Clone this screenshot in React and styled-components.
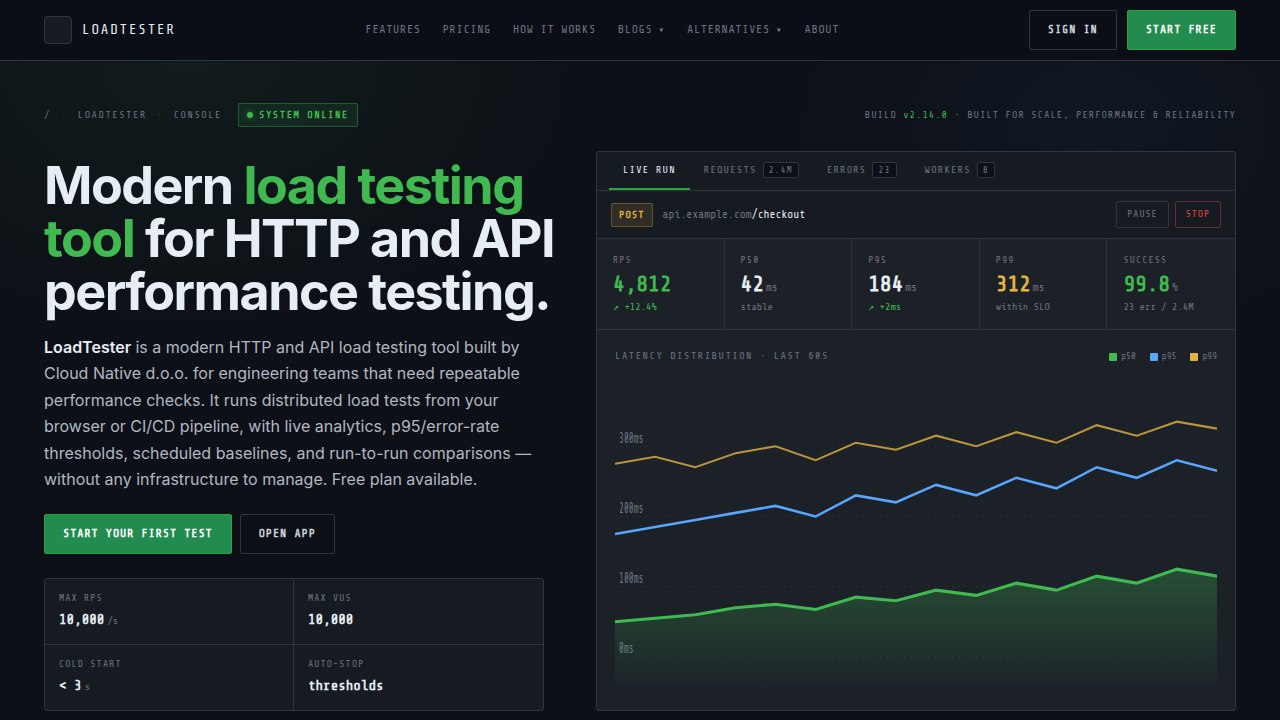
import React from "react";
import styled, { createGlobalStyle } from "styled-components";

const GlobalStyle = createGlobalStyle`
  * {
    box-sizing: border-box;
  }
  body {
    margin: 0;
    height: 720px;
    overflow: hidden;
    background: #0d1017;
    color: #e6edf3;
    font-family: Inter, sans-serif;
  }
`;

const mono = `"Share Tech Mono", monospace`;

const Page = styled.div`
  height: 720px;
  overflow: hidden;
  display: flex;
  flex-direction: column;
  background:
    radial-gradient(ellipse 400px 280px at 190px 60px, rgba(63, 185, 80, 0.07), transparent 100%),
    radial-gradient(ellipse 300px 220px at 1090px 125px, rgba(56, 139, 200, 0.06), transparent 100%),
    #0d1017;
`;

const Header = styled.header`
  flex: none;
  height: 61px;
  padding: 0 44px;
  display: flex;
  align-items: center;
  justify-content: space-between;
  background: #0b0e16;
  border-bottom: 1px solid #30363d;
  font-family: ${mono};
`;

const Brand = styled.div`
  display: flex;
  align-items: center;
  gap: 10px;
  font-size: 14px;
  letter-spacing: 0.13em;
`;

const BrandName = styled.span`
  padding-bottom: 1px;
`;

const Logo = styled.div`
  width: 28px;
  height: 28px;
  border: 1px solid #30363d;
  border-radius: 4px;
  background: #161b22;
`;

const Nav = styled.nav`
  display: flex;
  gap: 22px;
  padding-bottom: 1px;
  font-size: 11.5px;
  letter-spacing: 0.06em;
  color: #6e7480;
`;

const NavItem = styled.span`
  display: flex;
  align-items: center;
`;

const Caret = styled.span`
  margin-left: 6px;
  font-size: 10px;
  line-height: 12px;
`;

const ButtonRow = styled.div`
  display: flex;
  gap: ${(p) => p.$gap}px;
`;

const Button = styled.button`
  height: 40px;
  padding: 0 18px 1px;
  border: 1px solid ${(p) => (p.$primary ? "#2ea043" : "#30363d")};
  border-radius: 2px;
  background: ${(p) => (p.$primary ? "#218c4e" : "transparent")};
  color: ${(p) => (p.$primary ? "#ffffff" : "#c9d1d9")};
  font-family: ${mono};
  font-size: 11.5px;
  font-weight: 700;
  letter-spacing: 0.08em;
  white-space: nowrap;
  cursor: pointer;
`;

const Main = styled.main`
  padding: 42px 44px 0;
`;

const StatusBar = styled.div`
  height: 24px;
  display: flex;
  align-items: center;
  justify-content: space-between;
  font-family: ${mono};
  font-size: 10px;
  color: #6e7480;
`;

const Crumbs = styled.div`
  display: flex;
  align-items: center;
  gap: 10px;
  letter-spacing: 0.15em;
`;

const Crumb = styled.span`
  padding-bottom: 1px;
  color: ${(p) => (p.$faint ? "#3d444d" : "inherit")};
`;

const Online = styled.span`
  height: 24px;
  margin-left: 6px;
  padding: 0 8px;
  display: flex;
  align-items: center;
  gap: 6px;
  border: 1px solid rgba(46, 160, 67, 0.45);
  border-radius: 2px;
  background: rgba(46, 160, 90, 0.12);
  color: #3fb950;
  font-weight: 700;
`;

const Dot = styled.span`
  width: 6px;
  height: 6px;
  border-radius: 50%;
  background: #3fb950;
  box-shadow: 0 0 6px rgba(63, 185, 80, 0.6);
`;

const Build = styled.div`
  padding-bottom: 1px;
  letter-spacing: 0.1em;
  b {
    font-weight: 400;
    color: #3fb950;
  }
`;

const Hero = styled.section`
  margin-top: 24px;
  height: 560px;
  display: grid;
  grid-template-columns: 512px 640px;
  gap: 40px;
`;

const Intro = styled.div`
  padding-top: 8px;
`;

const Title = styled.h1`
  margin: 0;
  font-size: 52px;
  font-weight: 700;
  line-height: 53px;
  letter-spacing: -0.03em;
  em {
    font-style: normal;
    color: #3fb950;
  }
`;

const Lead = styled.p`
  margin: 16px 0 21.6px;
  max-width: 500px;
  font-size: 16px;
  line-height: 26.4px;
  color: #b1b8c1;
  strong {
    font-weight: 600;
    color: #e6edf3;
  }
`;

const Stats = styled.div`
  margin-top: 24px;
  width: 500px;
  display: grid;
  grid-template-columns: 249px 249px;
  grid-template-rows: 66px 65px;
  overflow: hidden;
  border: 1px solid #30363d;
  border-radius: 3px;
  background: #161b22;
  font-family: ${mono};
`;

const Stat = styled.div`
  padding: 12px 14px;
  &:nth-child(odd) {
    border-right: 1px solid #30363d;
  }
  &:nth-child(-n + 2) {
    border-bottom: 1px solid #30363d;
  }
`;

const Label = styled.div`
  font-size: 9.5px;
  line-height: 14px;
  letter-spacing: 0.12em;
  color: #6e7480;
`;

const StatValue = styled.div`
  margin-top: 5px;
  font-size: 14px;
  line-height: 20px;
  font-weight: 700;
`;

const Unit = styled.span`
  margin-left: ${(p) => p.$gap}px;
  font-size: ${(p) => p.$size}px;
  line-height: 1;
  font-weight: 400;
  color: #6e7480;
`;

const Panel = styled.div`
  display: flex;
  flex-direction: column;
  overflow: hidden;
  border: 1px solid #30363d;
  border-radius: 3px;
  background: #161b22;
  font-family: ${mono};
`;

const Tabs = styled.div`
  height: 39px;
  padding: 0 12px;
  display: flex;
  border-bottom: 1px solid #30363d;
`;

const Tab = styled.div`
  padding: 0 14px;
  display: flex;
  align-items: center;
  gap: 6px;
  border-bottom: 2px solid ${(p) => (p.$active ? "#2ea043" : "transparent")};
  font-size: 10px;
  letter-spacing: 0.12em;
  color: ${(p) => (p.$active ? "#e6edf3" : "#6e7480")};
`;

const TabName = styled.span`
  padding-bottom: 1px;
`;

const Count = styled.span`
  height: 16px;
  padding: 0 5px;
  line-height: 14px;
  border: 1px solid #30363d;
  border-radius: 2px;
  background: #0d1017;
  font-size: 9px;
`;

const RequestBar = styled.div`
  height: 48px;
  padding: 0 14px;
  display: flex;
  align-items: center;
  gap: 10px;
  border-bottom: 1px solid #30363d;
`;

const Method = styled.span`
  height: 24px;
  padding: 0 7px;
  line-height: 22px;
  border: 1px solid rgba(227, 179, 65, 0.3);
  border-radius: 2px;
  background: rgba(227, 179, 65, 0.12);
  color: #e3b341;
  font-size: 10px;
  font-weight: 700;
  letter-spacing: 0.1em;
`;

const Url = styled.span`
  flex: 1;
  font-size: 11px;
  color: #6e7480;
  b {
    font-weight: 400;
    color: #e6edf3;
  }
`;

const Control = styled.button`
  height: 27px;
  padding: 0 10px 2px;
  border: 1px solid ${(p) => (p.$danger ? "rgba(248, 81, 73, 0.35)" : "#30363d")};
  border-radius: 2px;
  background: transparent;
  color: ${(p) => (p.$danger ? "#e5493f" : "#6e7480")};
  font-family: ${mono};
  font-size: 9.5px;
  letter-spacing: 0.1em;
  cursor: pointer;
`;

const Metrics = styled.div`
  height: 91px;
  display: grid;
  grid-template-columns: repeat(5, 1fr);
  border-bottom: 1px solid #30363d;
  background: #1c2128;
`;

const Metric = styled.div`
  padding: 14px 0 0 16px;
  border-right: 1px solid #30363d;
  &:last-child {
    border-right: none;
  }
`;

const tones = { good: "#3fb950", warn: "#e3b341", plain: "#e6edf3", muted: "#6e7480" };

const MetricValue = styled.div`
  margin-top: 4px;
  font-size: 22px;
  line-height: 26px;
  font-weight: 700;
  letter-spacing: -0.01em;
  color: ${(p) => tones[p.$tone]};
`;

const Delta = styled.div`
  margin-top: 3px;
  font-size: 10px;
  line-height: 14px;
  color: ${(p) => tones[p.$tone]};
`;

const ChartArea = styled.div`
  flex: 1;
  padding: 18px;
  display: flex;
  flex-direction: column;
  background: #1c2128;
`;

const ChartHead = styled.div`
  height: 16px;
  margin-bottom: 12px;
  display: flex;
  align-items: center;
  justify-content: space-between;
  font-size: 10px;
  color: #6e7480;
`;

const ChartTitle = styled.span`
  padding-bottom: 1px;
  letter-spacing: 0.15em;
`;

const Legend = styled.div`
  display: flex;
  gap: 14px;
  font-size: 9px;
`;

const LegendItem = styled.span`
  display: flex;
  align-items: center;
  gap: 4px;
  &::before {
    content: "";
    width: 8px;
    height: 8px;
    margin-top: 2px;
    border-radius: 1px;
    background: ${(p) => p.$color};
  }
`;

const Chart = styled.svg`
  display: block;
  width: 602px;
  height: 316px;
  text {
    font-family: ${mono};
    font-size: 9px;
    fill: #6e7480;
  }
`;

const navItems = [
  { name: "FEATURES" },
  { name: "PRICING" },
  { name: "HOW IT WORKS" },
  { name: "BLOGS", menu: true },
  { name: "ALTERNATIVES", menu: true },
  { name: "ABOUT" },
];

const tabs = [
  { name: "LIVE RUN", active: true },
  { name: "REQUESTS", count: "2.4M" },
  { name: "ERRORS", count: "23" },
  { name: "WORKERS", count: "8" },
];

const stats = [
  { label: "MAX RPS", value: "10,000", unit: "/s" },
  { label: "MAX VUS", value: "10,000" },
  { label: "COLD START", value: "< 3", unit: "s" },
  { label: "AUTO-STOP", value: "thresholds" },
];

const metrics = [
  { label: "RPS", value: "4,812", tone: "good", note: "↗ +12.4%", noteTone: "good" },
  { label: "P50", value: "42", unit: "ms", tone: "plain", note: "stable", noteTone: "muted" },
  { label: "P95", value: "184", unit: "ms", tone: "plain", note: "↗ +2ms", noteTone: "good" },
  { label: "P99", value: "312", unit: "ms", tone: "warn", note: "within SLO", noteTone: "muted" },
  { label: "SUCCESS", value: "99.8", unit: "%", tone: "good", note: "23 err / 2.4M", noteTone: "muted" },
];

const p50 = [140, 138, 136, 132, 130, 133, 126, 128, 122, 125, 118, 122, 114, 118, 110, 114];
const p95 = [90, 86, 82, 78, 74, 80, 68, 72, 62, 68, 58, 64, 52, 58, 48, 54];
const p99 = [50, 46, 52, 44, 40, 48, 38, 42, 34, 40, 32, 38, 28, 34, 26, 30];

const grid = [
  { y: 40, label: "300ms" },
  { y: 80, label: "200ms" },
  { y: 120, label: "100ms" },
  { y: 160, label: "0ms" },
];

const toPoints = (series) => series.map((y, i) => `${i * 40},${y}`).join(" ");

const LatencyChart = () => (
  <Chart viewBox="0 0 600 180" preserveAspectRatio="none">
    <defs>
      <linearGradient id="p50fill" x1="0" y1="0" x2="0" y2="1">
        <stop offset="0%" stopColor="#3fb950" stopOpacity="0.3" />
        <stop offset="100%" stopColor="#3fb950" stopOpacity="0" />
      </linearGradient>
    </defs>
    {grid.map((g) => (
      <line key={g.y} x1="0" x2="600" y1={g.y} y2={g.y} stroke="#30363d" strokeWidth="0.5" strokeDasharray="2 4" />
    ))}
    {grid.map((g) => (
      <text key={g.y} x="4" y={g.y - 2}>{g.label}</text>
    ))}
    <polygon points={`0,180 ${toPoints(p50)} 600,180`} fill="url(#p50fill)" />
    <polyline points={toPoints(p50)} fill="none" stroke="#3fb950" strokeWidth="1.8" />
    <polyline points={toPoints(p95)} fill="none" stroke="#58a6ff" strokeWidth="1.5" />
    <polyline points={toPoints(p99)} fill="none" stroke="#e3b341" strokeWidth="1.2" opacity="0.8" />
  </Chart>
);

const App = () => {
  return (
    <Page>
      <GlobalStyle />
      <Header>
        <Brand>
          <Logo />
          <BrandName>LOADTESTER</BrandName>
        </Brand>
        <Nav>
          {navItems.map((item) => (
            <NavItem key={item.name}>
              {item.name}
              {item.menu && <Caret>▾</Caret>}
            </NavItem>
          ))}
        </Nav>
        <ButtonRow $gap={10}>
          <Button>SIGN IN</Button>
          <Button $primary>START FREE</Button>
        </ButtonRow>
      </Header>
      <Main>
        <StatusBar>
          <Crumbs>
            <Crumb>/</Crumb>
            <Crumb $faint>·</Crumb>
            <Crumb>LOADTESTER</Crumb>
            <Crumb $faint>·</Crumb>
            <Crumb>CONSOLE</Crumb>
            <Online>
              <Dot />
              <Crumb>SYSTEM ONLINE</Crumb>
            </Online>
          </Crumbs>
          <Build>
            BUILD <b>v2.14.0</b> · BUILT FOR SCALE, PERFORMANCE &amp; RELIABILITY
          </Build>
        </StatusBar>
        <Hero>
          <Intro>
            <Title>
              Modern <em>load testing tool</em> for HTTP and API performance testing.
            </Title>
            <Lead>
              <strong>LoadTester</strong> is a modern HTTP and API load testing tool built by Cloud
              Native d.o.o. for engineering teams that need repeatable performance checks. It runs
              distributed load tests from your browser or CI/CD pipeline, with live analytics,
              p95/error-rate thresholds, scheduled baselines, and run-to-run comparisons — without
              any infrastructure to manage. Free plan available.
            </Lead>
            <ButtonRow $gap={8}>
              <Button $primary>START YOUR FIRST TEST</Button>
              <Button>OPEN APP</Button>
            </ButtonRow>
            <Stats>
              {stats.map((s) => (
                <Stat key={s.label}>
                  <Label>{s.label}</Label>
                  <StatValue>
                    {s.value}
                    {s.unit && <Unit $gap={3} $size={10}>{s.unit}</Unit>}
                  </StatValue>
                </Stat>
              ))}
            </Stats>
          </Intro>
          <Panel>
            <Tabs>
              {tabs.map((t) => (
                <Tab key={t.name} $active={t.active}>
                  <TabName>{t.name}</TabName>
                  {t.count && <Count>{t.count}</Count>}
                </Tab>
              ))}
            </Tabs>
            <RequestBar>
              <Method>POST</Method>
              <Url>
                api.example.com<b>/checkout</b>
              </Url>
              <ButtonRow $gap={6}>
                <Control>PAUSE</Control>
                <Control $danger>STOP</Control>
              </ButtonRow>
            </RequestBar>
            <Metrics>
              {metrics.map((m) => (
                <Metric key={m.label}>
                  <Label>{m.label}</Label>
                  <MetricValue $tone={m.tone}>
                    {m.value}
                    {m.unit && <Unit $gap={2} $size={11}>{m.unit}</Unit>}
                  </MetricValue>
                  <Delta $tone={m.noteTone}>{m.note}</Delta>
                </Metric>
              ))}
            </Metrics>
            <ChartArea>
              <ChartHead>
                <ChartTitle>LATENCY DISTRIBUTION · LAST 60S</ChartTitle>
                <Legend>
                  <LegendItem $color="#3fb950">p50</LegendItem>
                  <LegendItem $color="#58a6ff">p95</LegendItem>
                  <LegendItem $color="#e3b341">p99</LegendItem>
                </Legend>
              </ChartHead>
              <LatencyChart />
            </ChartArea>
          </Panel>
        </Hero>
      </Main>
    </Page>
  );
};

export default App;
